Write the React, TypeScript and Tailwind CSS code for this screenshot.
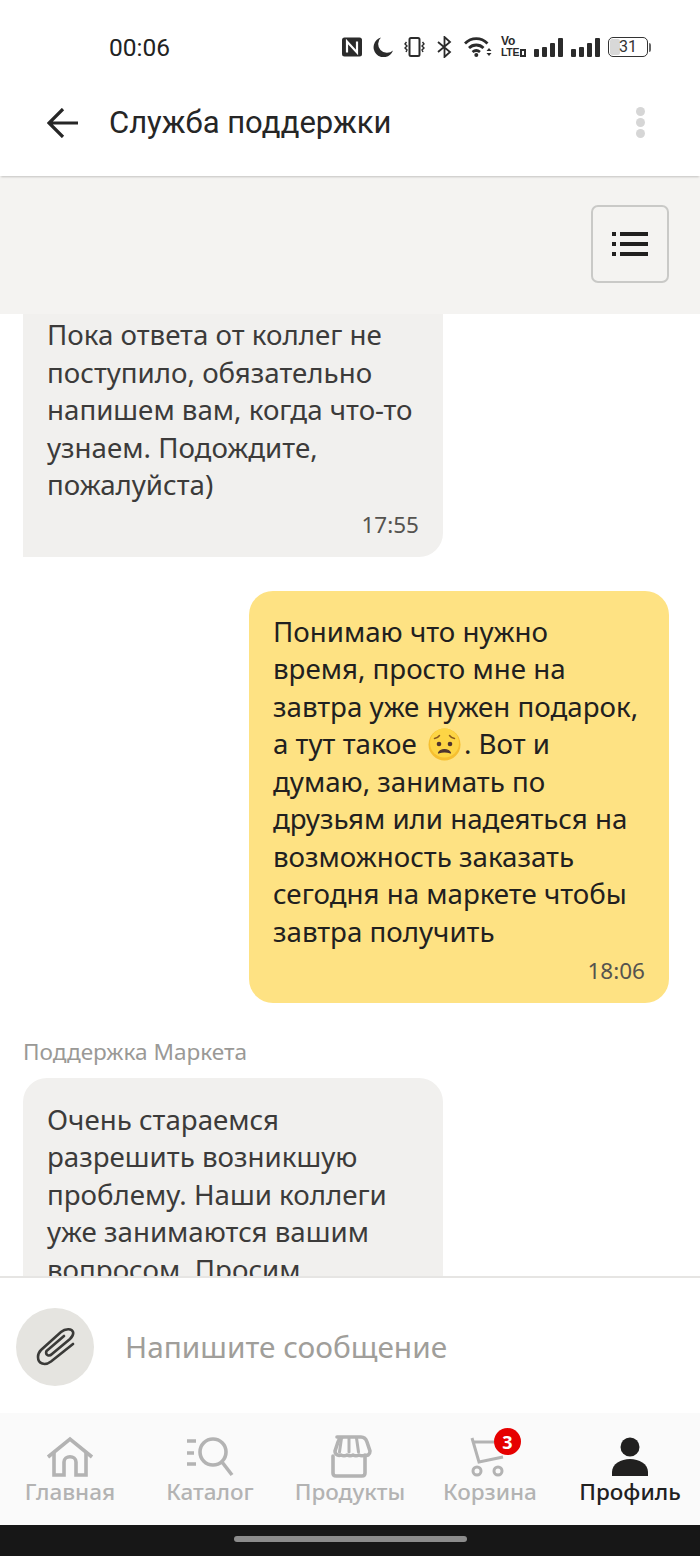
const textFont = "font-['Noto_Sans','Open_Sans',sans-serif]";

function StatusIcons() {
  return (
    <div className="flex items-center text-[#262626] h-[20px]">
      {/* NFC */}
      <svg width="20" height="20" viewBox="0 0 20 20">
        <rect x="0" y="0.500" width="20" height="19" rx="2.500" fill="#2b2b2b" />
        <path d="M5 15.500V4.500l10 11V4.500" fill="none" stroke="#fff" strokeWidth="2.200" />
      </svg>
      {/* moon */}
      <svg width="20" height="20" viewBox="0 0 20 20" className="ml-[11px]">
        <path d="M8 0.500a10 10 0 1 0 12 13A8.500 8.500 0 0 1 8 0.500z" fill="#2b2b2b" />
      </svg>
      {/* vibrate */}
      <svg width="21" height="20" viewBox="0 0 21 20" fill="none" stroke="#2b2b2b" className="ml-[11px]">
        <rect x="5.500" y="1" width="10" height="18" rx="1.500" strokeWidth="2" />
        <path d="M2.500 5 1 7l2 2-2 2 2 2-1 2M18.500 5 20 7l-2 2 2 2-2 2 1 2" strokeWidth="1.400" />
      </svg>
      {/* bluetooth */}
      <svg width="15" height="22" viewBox="0 0 15 22" fill="none" stroke="#2b2b2b" strokeWidth="1.800" className="ml-[12px]">
        <path d="M1 6l12 10-5.500 5V1L13 6 1 16" />
      </svg>
      {/* wifi */}
      <svg width="28" height="20" viewBox="0 0 28 20" fill="none" stroke="#2b2b2b" strokeWidth="2.800" className="ml-[12px]">
        <path d="M1 6.500c6.500-6.500 16-6.500 22.500 0M5 11c4-4 10.500-4 14.500 0M8.500 15c2.500-2 5-2 7.500 0" />
        <circle cx="12.300" cy="18" r="2" fill="#2b2b2b" stroke="none" />
        <path d="M22.500 14h5l-2.500-3zM22.500 16h5l-2.500 3z" fill="#2b2b2b" stroke="none" />
      </svg>
      {/* VoLTE */}
      <div className="ml-[9px] w-[23px] flex flex-col items-start font-['Liberation_Sans',sans-serif] font-bold text-[#2b2b2b]">
        <span className="text-[12px] leading-[11px]">Vo</span>
        <div className="flex items-center gap-[1px]">
          <span className="text-[10.500px] leading-[11px] tracking-[-0.3px]">LTE</span>
          <div className="w-[6px] h-[8px] border-2 border-[#2b2b2b]" />
        </div>
      </div>
      <div className="ml-[10px]">
        <Signal />
      </div>
      <div className="ml-[8px]">
        <Signal />
      </div>
      {/* battery */}
      <div className="flex items-center ml-[8px]">
        <div className="relative w-[40px] h-[20px] rounded-[5px] border-[1.500px] border-[#333] overflow-hidden bg-white">
          <div className="absolute left-[1px] top-[1px] bottom-[1px] w-[10px] bg-[#d8d8d8] rounded-[2px]" />
          <span className="relative block text-center font-['Roboto',sans-serif] text-[16px] leading-[17px] text-[#333]">31</span>
        </div>
        <div className="w-[2px] h-[9px] bg-[#666] ml-[1px] rounded-r" />
      </div>
    </div>
  );
}

function Signal() {
  return (
    <div className="flex items-end gap-[3px] h-[19px] mt-[1px]">
      <div className="w-[5px] h-[8px] bg-[#2b2b2b] rounded-[1px]" />
      <div className="w-[5px] h-[10px] bg-[#2b2b2b] rounded-[1px]" />
      <div className="w-[5px] h-[14px] bg-[#2b2b2b] rounded-[1px]" />
      <div className="w-[5px] h-[19px] bg-[#2b2b2b] rounded-[1px]" />
    </div>
  );
}

function SadEmoji() {
  return (
    <svg width="33" height="33" viewBox="0 0 33 33" className="inline-block align-[-7px] ml-[4px] mr-[3px]">
      <circle cx="16.500" cy="16.500" r="16" fill="#f6bf30" />
      <circle cx="16.500" cy="15" r="14.500" fill="#fdd545" />
      <circle cx="11" cy="16" r="2.300" fill="#4e342e" />
      <circle cx="22" cy="16" r="2.300" fill="#4e342e" />
      <path d="M6.500 10.500c2-.3 4-1.500 5-3M26.500 10.500c-2-.3-4-1.500-5-3" fill="none" stroke="#8a5a1e" strokeWidth="1.500" strokeLinecap="round" />
      <path d="M10.500 25c2-4.500 10-4.500 12 0-3-1.500-9-1.500-12 0z" fill="#4e342e" stroke="#4e342e" strokeWidth="1.200" strokeLinejoin="round" />
    </svg>
  );
}

function NavLabel({ children, active }: { children: string; active?: boolean }) {
  return (
    <span className={`${textFont} -mt-[3px] text-[22.500px] leading-[28px] font-medium ${active ? 'text-[#21201f]' : 'text-[#b3b3b3]'}`}>
      {children}
    </span>
  );
}

export default function App() {
  return (
    <div className="w-[700px] h-[1556px] flex flex-col bg-white overflow-hidden">
      {/* Status bar */}
      <div className="h-[82px] shrink-0 flex items-start justify-between pt-[34px] pl-[109px] pr-[49px]">
        <span className="font-['Roboto',sans-serif] text-[24.500px] leading-[28px] text-[#222]">00:06</span>
        <div className="mt-[3px]">
          <StatusIcons />
        </div>
      </div>

      {/* Header */}
      <div className="h-[94px] shrink-0 flex items-center pl-[47px] pr-[55px] pb-[13px] shadow-[0_2px_2px_-1px_rgba(0,0,0,0.2)] relative bg-white">
        <svg width="31" height="30" viewBox="0 0 31 30" fill="none" stroke="#262626" strokeWidth="3.200">
          <path d="M16 1 2 15l14 14M2 15h29" />
        </svg>
        <span className="ml-[31px] font-['Roboto',sans-serif] text-[31px] leading-[36px] text-[#262626]">Служба поддержки</span>
        <div className="ml-auto flex flex-col gap-[2px]">
          <div className="w-[9px] h-[9px] rounded-full bg-[#d6d6d6]" />
          <div className="w-[9px] h-[9px] rounded-full bg-[#d6d6d6]" />
          <div className="w-[9px] h-[9px] rounded-full bg-[#d6d6d6]" />
        </div>
      </div>

      {/* Filter strip */}
      <div className="h-[138px] shrink-0 bg-[#f4f3f1] flex items-center justify-end pr-[31px] pb-[2px]">
        <div className="w-[78px] h-[78px] rounded-[7px] border-2 border-[#c9c9c7] flex flex-col items-center justify-center gap-[6px]">
          {[0, 1, 2].map((i) => (
            <div key={i} className="flex gap-[4px]">
              <div className="w-[4px] h-[4px] bg-[#21201f]" />
              <div className="w-[28px] h-[4px] bg-[#21201f]" />
            </div>
          ))}
        </div>
      </div>

      {/* Messages */}
      <div className={`flex-1 min-h-0 overflow-hidden flex flex-col ${textFont} text-[27.700px] leading-[37.500px] text-[#3c3b3a]`}>
        <div className="ml-[23px] w-[420px] bg-[#f1f0ee] rounded-br-[24px] pl-[24px] pr-[16px] pt-[2px] pb-[17px] shrink-0">
          <p>Пока ответа от коллег не поступило, обязательно напишем вам, когда что-то узнаем. Подождите, пожалуйста)</p>
          <p className="text-right text-[22.500px] leading-[30px] mt-[6px] pr-[8px] text-[#55534f]">17:55</p>
        </div>

        <div className="mt-[34px] ml-[249px] w-[420px] h-[412px] bg-[#fee283] rounded-[24px] pl-[24px] pr-[24px] pt-[22px] shrink-0 text-[#21201f]">
          <p>
            Понимаю что нужно время, просто мне на завтра уже нужен подарок, а тут такое <SadEmoji />. Вот и думаю, занимать по друзьям или надеяться на возможность заказать сегодня на маркете чтобы завтра получить
          </p>
          <p className="text-right text-[22.500px] leading-[30px] mt-[6px] text-[#55534f]">18:06</p>
        </div>

        <p className="mt-[34px] ml-[23px] text-[22.600px] leading-[30px] text-[#9a9996] shrink-0">Поддержка Маркета</p>
        <div className="mt-[11px] ml-[23px] w-[420px] bg-[#f1f0ee] rounded-[24px] pl-[24px] pr-[16px] pt-[23px] pb-[20px] shrink-0">
          <p>Очень стараемся разрешить возникшую проблему. Наши коллеги уже занимаются вашим вопросом. Просим прощения за ожидание</p>
        </div>
      </div>

      {/* Composer */}
      <div className="h-[137px] shrink-0 border-t-2 border-[#e6e5e3] bg-white flex items-center pl-[16px] pt-[2px]">
        <div className="w-[78px] h-[78px] rounded-full bg-[#e5e4e0] flex items-center justify-center">
          <svg width="40" height="40" viewBox="0 0 40 40" fill="none" stroke="#3a3a38" strokeWidth="2.600" strokeLinecap="round">
            <path d="M38 17 16 34.500C10 39 3 37 3 30c0-3 1-5 3-7L26 5c4-3.500 11-4 12 0 1 3-1 5-3 7L17 27c-3 3-7 1-5.500-3L29 9" />
          </svg>
        </div>
        <span className={`ml-[31px] ${textFont} text-[29.800px] leading-[36px] text-[#a09e9a]`}>Напишите сообщение</span>
      </div>

      {/* Tabs */}
      <div className="h-[112px] shrink-0 bg-[#fafafa] grid grid-cols-5 pt-[22px]">
        <div className="flex flex-col items-center">
          <svg width="48" height="46" viewBox="0 0 48 46" fill="none" stroke="#b3b3b3" strokeWidth="3.600">
            <path d="M2 22 24 4l22 18" />
            <path d="M8 18v22h10V27c0-7 12-7 12 0v13h10V18" />
          </svg>
          <NavLabel>Главная</NavLabel>
        </div>
        <div className="flex flex-col items-center">
          <svg width="48" height="46" viewBox="0 0 48 46" fill="none" stroke="#b3b3b3" strokeWidth="3.600">
            <path d="M1 6h9M1 18h7M1 29h9" />
            <circle cx="27" cy="17" r="13" />
            <path d="M36 27l10 13" />
          </svg>
          <NavLabel>Каталог</NavLabel>
        </div>
        <div className="flex flex-col items-center">
          <svg width="48" height="46" viewBox="0 0 48 46" fill="none" stroke="#b3b3b3" strokeWidth="3.600" strokeLinejoin="round" strokeLinecap="round">
            <path d="M11 2h24c3 0 5 2 6 5l3 9c0 4-3 5-5 4-2 1-4 1-6 0-2 1-4 1-6 0-2 1-4 1-6 0-2 1-4 1-6 0-2 1-6 0-6-4l3-9c1-3 3-5 6-5z" />
            <path d="M15.500 3l-2 14M23 3v14M30.500 3l2 14" strokeWidth="3" />
            <path d="M7 21v17c0 2 1 3 3 3h26c2 0 3-1 3-3V21" />
          </svg>
          <NavLabel>Продукты</NavLabel>
        </div>
        <div className="flex flex-col items-center relative">
          <svg width="48" height="46" viewBox="0 0 48 46" fill="none" stroke="#b3b3b3" strokeWidth="3">
            <path d="M6 3l7 24 24-5M7 7h21" />
            <circle cx="11" cy="36" r="4" />
            <circle cx="32" cy="36" r="4" />
          </svg>
          <div className="absolute left-[74px] -top-[7px] w-[27px] h-[27px] rounded-full bg-[#e60000] flex items-center justify-center">
            <span className="font-['Noto_Sans',sans-serif] font-bold text-[18px] leading-[20px] text-white">3</span>
          </div>
          <NavLabel>Корзина</NavLabel>
        </div>
        <div className="flex flex-col items-center">
          <svg width="48" height="46" viewBox="0 0 48 46" fill="#21201f">
            <circle cx="24" cy="12" r="9.500" />
            <path d="M6 41v-4c0-8 9-13 18-13s18 5 18 13v4z" />
          </svg>
          <NavLabel active>Профиль</NavLabel>
        </div>
      </div>

      {/* Android nav */}
      <div className="h-[31px] shrink-0 bg-[#171717] flex justify-center pt-[11px]">
        <div className="w-[233px] h-[6px] rounded-full bg-[#8c8c8c]" />
      </div>
    </div>
  );
}
